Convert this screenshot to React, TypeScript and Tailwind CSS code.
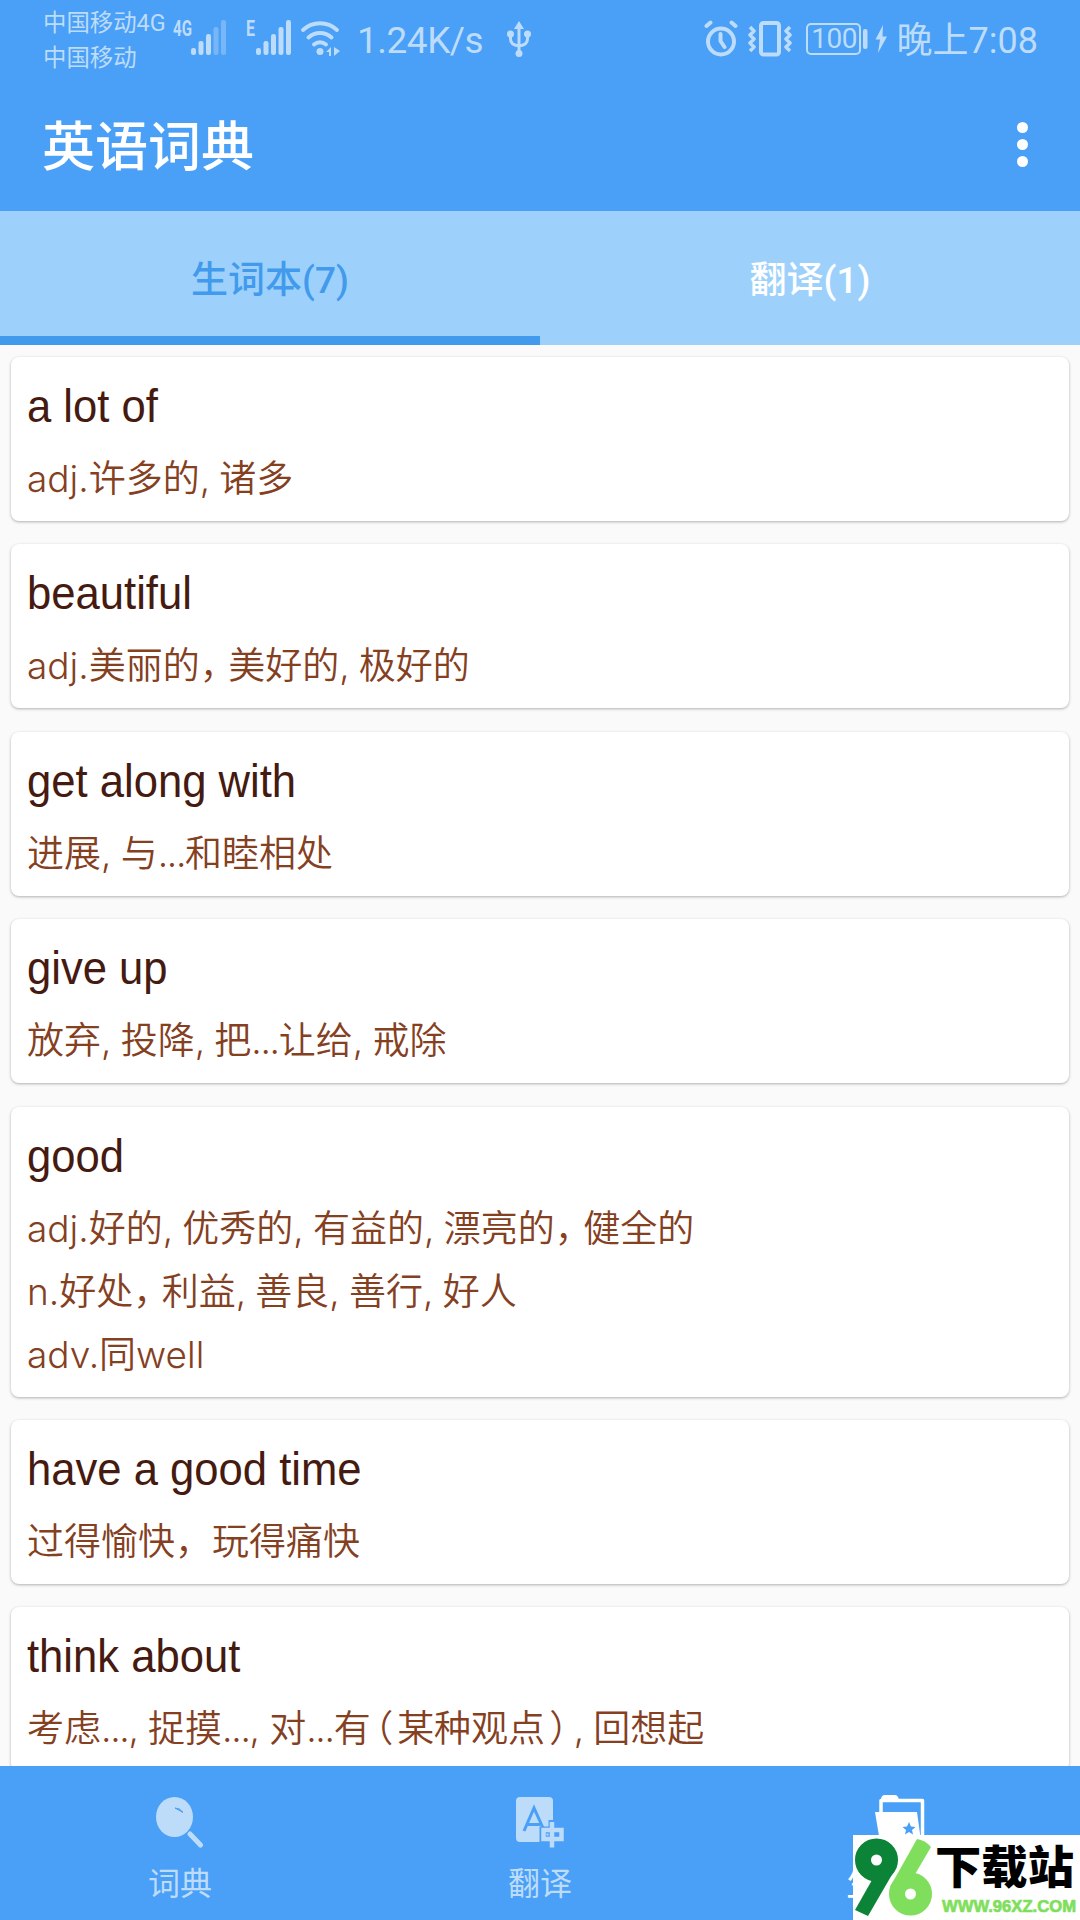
import { clsx } from 'clsx';
import type { ReactNode } from 'react';

type Word = { term: string; senses: string[]; tight?: boolean };

const words: Word[] = [
  { term: 'a lot of', senses: ['adj.许多的, 诸多'] },
  { term: 'beautiful', senses: ['adj.美丽的，美好的, 极好的'], tight: true },
  { term: 'get along with', senses: ['进展, 与...和睦相处'], tight: true },
  { term: 'give up', senses: ['放弃, 投降, 把...让给, 戒除'], tight: true },
  {
    term: 'good',
    senses: [
      'adj.好的, 优秀的, 有益的, 漂亮的，健全的',
      'n.好处，利益, 善良, 善行, 好人',
      'adv.同well',
    ],
    tight: true,
  },
  { term: 'have a good time', senses: ['过得愉快，玩得痛快'] },
  { term: 'think about', senses: ['考虑..., 捉摸..., 对...有（某种观点）, 回想起'], tight: true },
];

// half-width punctuation with its own side spacing
const tightSpacing: Record<string, string> = {
  '，': "[font-feature-settings:'halt'] mr-[10px]",
  '（': "[font-feature-settings:'halt'] ml-[4px] mr-[4px]",
  '）': "[font-feature-settings:'halt'] ml-[4px] mr-[6px]",
  '...': 'tracking-[-1.3px]',
};

function Signal({ label, level }: { label: string; level: number }) {
  const bars = [7, 14, 21, 28, 35];
  const wide = label.length > 1;
  const start = wide ? 19 : 11;
  return (
    <svg className="overflow-visible" width={wide ? 56 : 48} height="46" viewBox={wide ? '0 0 56 46' : '0 0 48 46'} fill="currentColor">
      <text x="1" y="22" fontSize="22" fontWeight="700" textLength={wide ? 19 : 9} lengthAdjust="spacingAndGlyphs">
        {label}
      </text>
      {bars.map((h, i) => (
        <rect key={h} x={start + i * 7.5} y={41 - h} width="5" height={h} rx="2.200" opacity={i < level ? 1 : 0.4} />
      ))}
    </svg>
  );
}

function StatusBar() {
  return (
    <div className="flex h-[78px] items-start pr-[42px] pl-[43px] text-[#bcdcfa]">
      <div className="w-[129px] pt-[6px] text-[23.4px] leading-[35px] whitespace-nowrap">
        <p>中国移动4G</p>
        <p>中国移动</p>
      </div>
      <div className="mt-[14px] flex">
        <Signal label="4G" level={3} />
        <div className="ml-[17px]">
          <Signal label="E" level={5} />
        </div>
        <svg className="mt-[5px] ml-[7px]" width="40" height="40" viewBox="0 0 40 40" fill="none" stroke="currentColor" strokeWidth="4" strokeLinecap="round">
          <path d="M3 11a25 25 0 0 1 34 0M8.500 18.500a17 17 0 0 1 23 0M14 25.500a9 9 0 0 1 12 0" />
          <circle cx="20" cy="32.500" r="3.500" fill="currentColor" stroke="none" />
          <path d="M26 33l5-5v9h-2v-4zM34 28l6 4-6 5z" fill="currentColor" stroke="none" />
        </svg>
      </div>
      <span className="mt-[19px] ml-[17px] text-[37px] leading-[44px] tracking-[-0.5px]">1.24K/s</span>
      <svg className="mt-[20px] ml-[24px]" width="24" height="40" viewBox="0 0 24 40" fill="none" stroke="currentColor" strokeWidth="3">
        <path d="M12 6v27M3.500 14v5q0 6 8.500 7q8.500-1 8.500-7v-5" />
        <path d="M12 1l5 8H7z" fill="currentColor" stroke="none" />
        <circle cx="3.500" cy="14" r="3.500" fill="currentColor" stroke="none" />
        <circle cx="20.500" cy="14" r="3.500" fill="currentColor" stroke="none" />
        <circle cx="12" cy="33.500" r="3.500" fill="currentColor" stroke="none" />
      </svg>
      <div className="ml-auto flex">
        <svg className="mt-[20px]" width="34" height="38" viewBox="0 0 34 38" fill="none" stroke="currentColor" strokeWidth="4" strokeLinecap="round">
          <circle cx="17" cy="21.500" r="13" />
          <path d="M16.500 14v7l4 6M2.500 6l4-3.500M31.500 6l-4-3.500" />
        </svg>
        <svg className="mt-[20px] ml-[10px]" width="44" height="38" viewBox="0 0 44 38" fill="none" stroke="currentColor" strokeWidth="4">
          <rect x="13" y="3" width="18" height="31.500" rx="2.500" />
          <path d="M2 7l4 4-4 4 4 4-4 4 4 4-4 4M42 7l-4 4 4 4-4 4 4 4-4 4 4 4" strokeWidth="3.500" strokeLinejoin="round" />
        </svg>
        <div className="mt-[23px] ml-[14px] flex h-[32px] w-[55px] items-center justify-center rounded-[5px] border-2 border-current pl-[2px] text-[28px] tracking-[-0.5px]">
          100
        </div>
        <svg className="mt-[22px] ml-[2px]" width="26" height="34" viewBox="0 0 26 34" fill="currentColor">
          <rect x="0" y="7" width="4.500" height="20" rx="2" />
          <path d="M20 3l-7.500 14.500h4.500L15 31l9-16.500h-4.500z" />
        </svg>
        <span className="mt-[19px] ml-[8px] text-[36px] leading-[44px]">晚上7:08</span>
      </div>
    </div>
  );
}

function TitleBar() {
  return (
    <div className="flex h-[133px] items-center justify-between pr-[52px] pl-[42px] text-white">
      <h1 className="pt-[8px] text-[53px] font-medium">英语词典</h1>
      <div className="flex flex-col gap-[6px]">
        <i className="size-[11px] rounded-full bg-white" />
        <i className="size-[11px] rounded-full bg-white" />
        <i className="size-[11px] rounded-full bg-white" />
      </div>
    </div>
  );
}

function Tabs() {
  return (
    <div className="grid h-[134px] grid-cols-2 bg-[#9dd1fb] text-center text-[37px] leading-[139px] font-medium">
      <div className="h-[134px] border-b-[9px] border-[#429aec] text-[#429aec]">生词本(7)</div>
      <div className="text-white">翻译(1)</div>
    </div>
  );
}

function Sense({ text, tight }: { text: string; tight?: boolean }) {
  if (!tight) return <>{text}</>;
  return (
    <>
      {text.split(/([，（）]|\.{3})/).map((part, i) => (
        <span key={i} className={tightSpacing[part]}>
          {part}
        </span>
      ))}
    </>
  );
}

function WordCard({ term, senses, tight }: Word) {
  return (
    <li className="shrink-0 rounded-[8px] bg-white px-[16px] pt-[17px] pb-[15px] shadow-[0_1px_3px_rgba(0,0,0,0.3)]">
      <h2 className="mb-[5px] origin-left scale-x-[0.948] font-['Liberation_Sans'] text-[46px] leading-[64px] text-[#451a10]">
        {term}
      </h2>
      {senses.map((sense) => (
        <p
          key={sense}
          className="pt-[8px] font-[Inter,'Noto_Sans_CJK_SC',sans-serif] text-[37px] leading-[55px] font-[350] text-[#84401f] [word-spacing:-1.2px]"
        >
          <Sense text={sense} tight={tight} />
        </p>
      ))}
    </li>
  );
}

function NavItem({ label, active, children }: { label: string; active?: boolean; children: ReactNode }) {
  return (
    <div className={clsx('flex flex-1 flex-col items-center pt-[30px]', active ? 'text-white' : 'text-[#bcdcfa]')}>
      {children}
      <span className={clsx('mt-[14px] leading-[44px]', active ? 'text-[36px]' : 'text-[32px]')}>{label}</span>
    </div>
  );
}

function BottomNav() {
  return (
    <nav className="relative flex h-[154px] shrink-0 bg-[#4a9ff6]">
      <NavItem label="词典">
        <svg width="50" height="52" viewBox="0 0 50 52" fill="currentColor">
          <ellipse cx="19.500" cy="21" rx="18.500" ry="20" />
          <path d="M35 38l10.500 11" stroke="currentColor" strokeWidth="5" strokeLinecap="round" />
          <path d="M20 12q5 0 8 4.500q-4-2.500-8-4.500" fill="#4a9ff6" stroke="#4a9ff6" />
        </svg>
      </NavItem>
      <NavItem label="翻译">
        <svg width="50" height="52" viewBox="0 0 50 52" fill="none">
          <rect x="1" y="1" width="37" height="45" rx="4" fill="currentColor" />
          <path d="M9 35L19 12l9 20M13 28.500h12" stroke="#4a9ff6" strokeWidth="3" />
          <path d="M37 24v28M28 34h19v9H28z" stroke="#4a9ff6" strokeWidth="7" />
          <path d="M37 26v25.500M28.500 34h18v9h-18z" stroke="currentColor" strokeWidth="4.500" />
        </svg>
      </NavItem>
      <NavItem label="生词本" active>
        <svg className="overflow-visible" width="52" height="52" viewBox="0 0 52 52">
          <path d="M7 17V4.500h41.500V50" fill="none" stroke="currentColor" strokeWidth="3.500" strokeLinejoin="round" />
          <path d="M7 4q0-5 4-5h10q3 0 4 5zM1 16h42l5 36H7z" fill="currentColor" />
          <path d="M35 26l2 4.500 4.500.5-3.500 3 1 4.500-4-2.500-4 2.500 1-4.500-3.500-3 4.500-.5z" fill="#4a9ff6" />
        </svg>
      </NavItem>
      <Watermark />
    </nav>
  );
}

function Watermark() {
  return (
    <svg className="absolute right-0 bottom-0" width="227" height="85" viewBox="0 0 227 85">
      <rect width="227" height="85" fill="#fff" />
      <circle cx="23.500" cy="25" r="13.500" fill="none" stroke="#0b8438" strokeWidth="16" />
      <path d="M44 31L15 81L2 75L19 45z" fill="#0b8438" />
      <circle cx="57.500" cy="59" r="13.500" fill="none" stroke="#7fdf5c" strokeWidth="16" />
      <path d="M37 52L64 4q8 1 14 8L61 41z" fill="#7fdf5c" />
      <text x="82" y="49" fontSize="45" fontWeight="900" textLength="139" lengthAdjust="spacingAndGlyphs">
        下载站
      </text>
      <text className="font-['Liberation_Sans']" x="89" y="77" fontSize="17" fontWeight="700" fill="#7fdf5c" stroke="#7fdf5c" strokeWidth="0.700" textLength="134" lengthAdjust="spacingAndGlyphs">
        WWW.96XZ.COM
      </text>
    </svg>
  );
}

export default function App() {
  return (
    <div className="flex h-[1920px] w-[1080px] flex-col overflow-hidden bg-[#fafafa] font-[Roboto,'Noto_Sans_CJK_SC',sans-serif]">
      <header className="shrink-0 bg-[#4a9ff6]">
        <StatusBar />
        <TitleBar />
        <Tabs />
      </header>
      <ul className="flex min-h-0 flex-1 flex-col gap-[23.4px] overflow-hidden px-[11px] pt-[12px]">
        {words.map((word) => (
          <WordCard key={word.term} {...word} />
        ))}
      </ul>
      <BottomNav />
    </div>
  );
}
